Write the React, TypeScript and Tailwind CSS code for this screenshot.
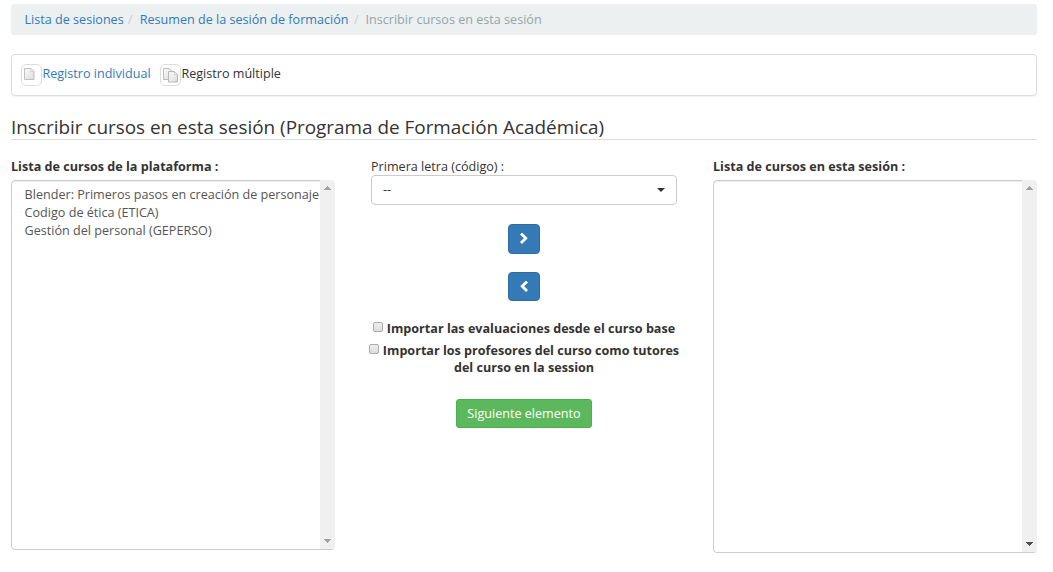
import React from 'react';

function PageIcon({ double = false }: { double?: boolean }) {
  return (
    <span className="flex h-[22px] w-[21px] shrink-0 items-center justify-center rounded-[5px] border border-[#dddddd] bg-white">
      <svg width="19" height="20" viewBox="0 0 19 20" fill="none">
        <defs>
          <linearGradient id={double ? 'pageB' : 'pageA'} x1="0" y1="0" x2="1" y2="1">
            <stop offset="0" stopColor="#fafafa" />
            <stop offset="1" stopColor="#dcdcdc" />
          </linearGradient>
        </defs>
        {double ? (
          <>
            <path d="M2.5 3.5H8.5L10.5 5.5V14.5H2.5Z" fill="url(#pageB)" stroke="#bdbdbd" />
            <path d="M7.5 6.5H13.5L16.5 9.5V17H7.5Z" fill="url(#pageB)" stroke="#b8b8b8" />
            <path d="M13.5 6.5V9.5H16.5Z" fill="#ffffff" stroke="#c0c0c0" strokeWidth="0.8" />
          </>
        ) : (
          <>
            <path d="M2.5 3.5H9L12 6.5V14.5H2.5Z" fill="url(#pageA)" stroke="#c0c0c0" />
            <path d="M9 3.5V6.5H12Z" fill="#ffffff" stroke="#c8c8c8" strokeWidth="0.8" />
          </>
        )}
      </svg>
    </span>
  );
}

function ScrollBar({ downColor }: { downColor: string }) {
  return (
    <div className="flex w-[15px] shrink-0 flex-col items-center justify-between bg-[#f0f0f0] pt-[6px] pb-[6px]">
      <svg width="7" height="4" viewBox="0 0 7 4" fill="#a3a3a3" shapeRendering="crispEdges">
        <path d="M3 0h1v1h1v1h1v1h1v1H0V3h1V2h1V1h1z" />
      </svg>
      <svg width="7" height="4" viewBox="0 0 7 4" fill={downColor} shapeRendering="crispEdges">
        <path d="M0 0h7v1H6v1H5v1H4v1H3V3H2V2H1V1H0z" />
      </svg>
    </div>
  );
}

function CourseList({ items, boxClass, downColor }: { items: string[]; boxClass: string; downColor: string }) {
  return (
    <div className={'flex overflow-hidden rounded-[4px] ' + boxClass}>
      <div className="min-w-0 flex-1 overflow-hidden rounded-l-[4px] border border-r-0 border-[#cccccc] pt-[5px] pl-[12.6px] leading-[18px] text-[#555555] shadow-[inset_0_1px_1px_rgba(0,0,0,0.075)]">
        {items.map((t) => (
          <div key={t} className="whitespace-nowrap">{t}</div>
        ))}
      </div>
      <div className="flex border-b border-[#cccccc]">
        <ScrollBar downColor={downColor} />
      </div>
    </div>
  );
}

function Check() {
  return (
    <span className="mr-[4px] inline-block h-[10px] w-[10px] rounded-[2px] border border-[#ababab] bg-linear-to-b from-[#eeeeee] to-[#dcdcdc] align-[1px]" />
  );
}

export default function App() {
  return (
    <div className="h-[572px] w-[1053px] overflow-hidden bg-white pt-[4px] pr-[16px] pl-[11px] font-['Open_Sans',sans-serif] text-[12.6px] leading-[18px] text-[#333333]">
      <nav className="flex h-[31px] items-center rounded-[3px] bg-[#ecf0f1] pl-[13.5px] text-[#95a5a6]">
        <a className="text-[#337ab7]">Lista de sesiones</a>
        <span className="w-[16px] pl-[4px] text-[#cccccc]">/</span>
        <a className="text-[#337ab7]">Resumen de la sesión de formación</a>
        <span className="w-[17px] pl-[5.5px] text-[#cccccc]">/</span>
        <span>Inscribir cursos en esta sesión</span>
      </nav>

      <div className="mt-[19px] flex h-[42px] items-center rounded-[4px] border border-[#dddddd] pl-[9px] shadow-[0_1px_1px_rgba(0,0,0,0.05)]">
        <PageIcon />
        <a className="w-[118px] pb-[3px] pl-[0.4px] text-[#337ab7]">Registro individual</a>
        <PageIcon double />
        <span className="pb-[3px] pl-[0.4px]">Registro múltiple</span>
      </div>

      <h3 className="mt-[20px] h-[24px] border-b border-[#dddddd] text-[18.9px] leading-[23px]">
        Inscribir cursos en esta sesión (Programa de Formación Académica)
      </h3>

      <main className="mt-[17px] flex justify-between">
        <section className="w-[324px]">
          <div className="h-[23px] leading-[20px] font-bold">Lista de cursos de la plataforma :</div>
          <CourseList
            items={[
              'Blender: Primeros pasos en creación de personaje',
              'Codigo de ética (ETICA)',
              'Gestión del personal (GEPERSO)',
            ]}
            boxClass="h-[370px]"
            downColor="#a3a3a3"
          />
        </section>

        <section className="flex w-[306px] flex-col items-center">
          <div className="h-[18px] w-full leading-[20px]">Primera letra (código) :</div>
          <div className="flex h-[30px] w-full items-center justify-between rounded-[4px] border border-[#cccccc] pr-[11px] pl-[11px]">
            <span>--</span>
            <svg width="8" height="4" viewBox="0 0 8 4" fill="#333333">
              <path d="M0 0h8L4 4z" />
            </svg>
          </div>
          <button className="mt-[19px] flex h-[30px] w-[32px] items-center justify-center rounded-[4px] border border-[#2e6da4] bg-[#337ab7]">
            <svg width="10" height="12" viewBox="0 0 10 12" fill="none" stroke="#ffffff" strokeWidth="2.8">
              <path d="M2 0.5L6.8 5.3L2 10.1" />
            </svg>
          </button>
          <button className="mt-[18px] flex h-[29px] w-[32px] items-center justify-center rounded-[4px] border border-[#2e6da4] bg-[#337ab7]">
            <svg width="10" height="12" viewBox="0 0 10 12" fill="none" stroke="#ffffff" strokeWidth="2.8">
              <path d="M8 0.5L3.2 5.3L8 10.1" />
            </svg>
          </button>
          <label className="mt-[19px] font-bold whitespace-nowrap">
            <Check />
            Importar las evaluaciones desde el curso base
          </label>
          <label className="mt-[4px] text-center leading-[17px] font-bold whitespace-nowrap">
            <Check />
            Importar los profesores del curso como tutores
            <br />
            del curso en la session
          </label>
          <button className="mt-[23px] h-[29px] w-[136px] rounded-[3px] border border-[#4cae4c] bg-[#5cb85c] text-white">
            Siguiente elemento
          </button>
        </section>

        <section className="w-[324px]">
          <div className="h-[23px] leading-[20px] font-bold">Lista de cursos en esta sesión :</div>
          <CourseList items={[]} boxClass="h-[373px]" downColor="#505050" />
        </section>
      </main>
    </div>
  );
}
